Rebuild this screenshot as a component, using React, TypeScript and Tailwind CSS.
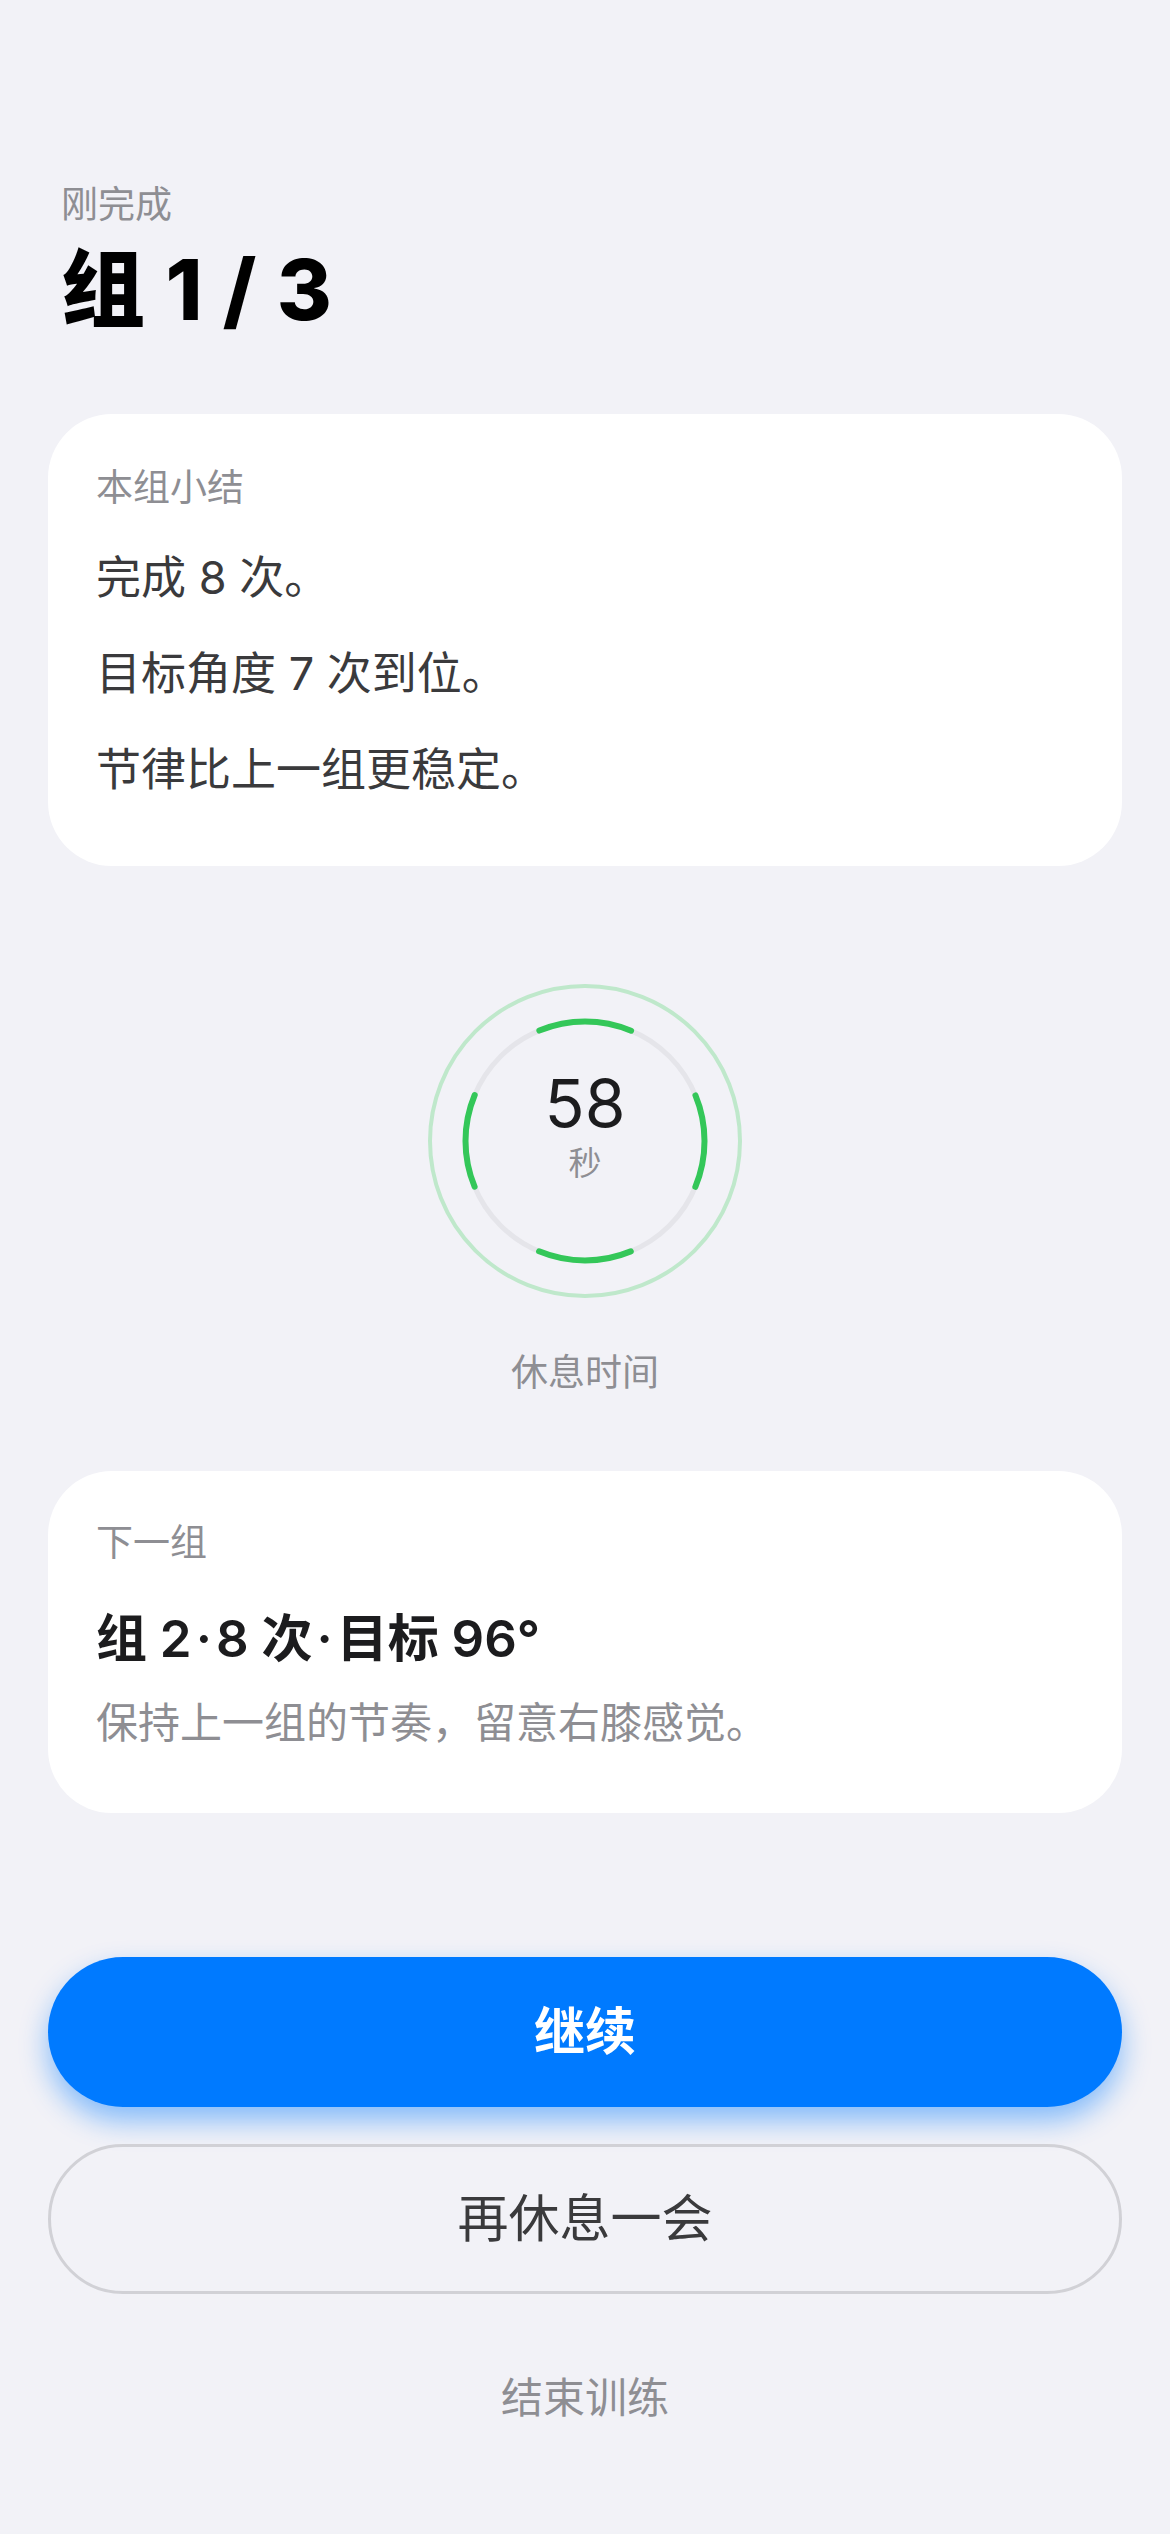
import React from 'react';

const FONT = { fontFamily: 'Inter, "Noto Sans CJK SC", "Noto Sans", sans-serif' };

const summaryLines = ['完成 8 次。', '目标角度 7 次到位。', '节律比上一组更稳定。'];

// Rest timer ring: faint outer halo, grey track, four green segments
const RestRing = ({ seconds }: { seconds: number }) => {
  const r = 119.5;
  const circumference = 2 * Math.PI * r;
  const period = circumference / 4;
  const dash = period * (48 / 90) - 6;
  const gap = period - dash;

  return (
    <div className="relative w-[320px] h-[320px]">
      <svg width="320" height="320" viewBox="0 0 320 320">
        <circle cx="160" cy="160" r="155" fill="none" stroke="#bfe8cb" strokeWidth="4" />
        <circle cx="160" cy="160" r={r} fill="none" stroke="#e5e5ea" strokeWidth="5" />
        <circle
          cx="160"
          cy="160"
          r={r}
          fill="none"
          stroke="#34c759"
          strokeWidth="6"
          strokeLinecap="round"
          strokeDasharray={`${dash} ${gap}`}
          strokeDashoffset={dash / 2}
        />
      </svg>
      <div className="absolute inset-0 flex flex-col items-center justify-center pb-[30px]">
        <div className="text-[66px] leading-[66px] text-[#1c1c1e]">{seconds}</div>
        <div className="mt-[7px] text-[33px] leading-[40px] text-[#8e8e93]">秒</div>
      </div>
    </div>
  );
};

export default function App() {
  return (
    <div className="min-h-[2534px] w-full bg-[#f2f2f7] px-[48px] pt-[183px] pb-[60px]" style={FONT}>
      {/* Header */}
      <div className="px-[13px]">
        <div className="text-[37px] leading-[44px] text-[#8e8e93]">刚完成</div>
        <h1 className="mt-[13px] text-[84px] leading-[100px] font-extrabold tracking-[1px] text-black">组 1 / 3</h1>
      </div>

      {/* Summary card */}
      <div className="mt-[74px] rounded-[64px] bg-white px-[48px] pt-[52px] pb-[66px]">
        <div className="text-[37px] leading-[44px] text-[#8e8e93]">本组小结</div>
        <div className="mt-[38px] flex flex-col gap-[36px]">
          {summaryLines.map((line) => (
            <p key={line} className="text-[45px] leading-[60px] text-[#3a3a3c]">
              {line}
            </p>
          ))}
        </div>
      </div>

      {/* Timer */}
      <div className="mt-[115px] flex flex-col items-center">
        <RestRing seconds={58} />
        <div className="mt-[50px] text-[37px] leading-[44px] text-[#8e8e93]">休息时间</div>
      </div>

      {/* Next set card */}
      <div className="mt-[76px] rounded-[64px] bg-white px-[48px] pt-[50px] pb-[64px]">
        <div className="text-[37px] leading-[44px] text-[#8e8e93]">下一组</div>
        <div className="mt-[43px] text-[51px] leading-[62px] font-semibold text-[#1c1c1e]">
          组 2<span className="mx-[4px]">·</span>8 次<span className="mx-[4px]">·</span>目标 96°
        </div>
        <div className="mt-[27px] text-[42px] leading-[52px] text-[#8e8e93]">
          保持上一组的节奏，留意右膝感觉。
        </div>
      </div>

      {/* Actions */}
      <div className="mt-[144px] flex flex-col gap-[37px]">
        <button className="h-[150px] w-full rounded-full bg-[#007aff] text-[51px] font-bold text-white shadow-[0_14px_28px_rgba(0,122,255,0.45)]">
          继续
        </button>
        <button className="h-[150px] w-full rounded-full border-[3px] border-[#d1d1d6] bg-transparent text-[51px] text-[#3a3a3c]">
          再休息一会
        </button>
      </div>

      <div className="mt-[78px] text-center text-[42px] leading-[52px] text-[#8e8e93]">结束训练</div>
    </div>
  );
}
